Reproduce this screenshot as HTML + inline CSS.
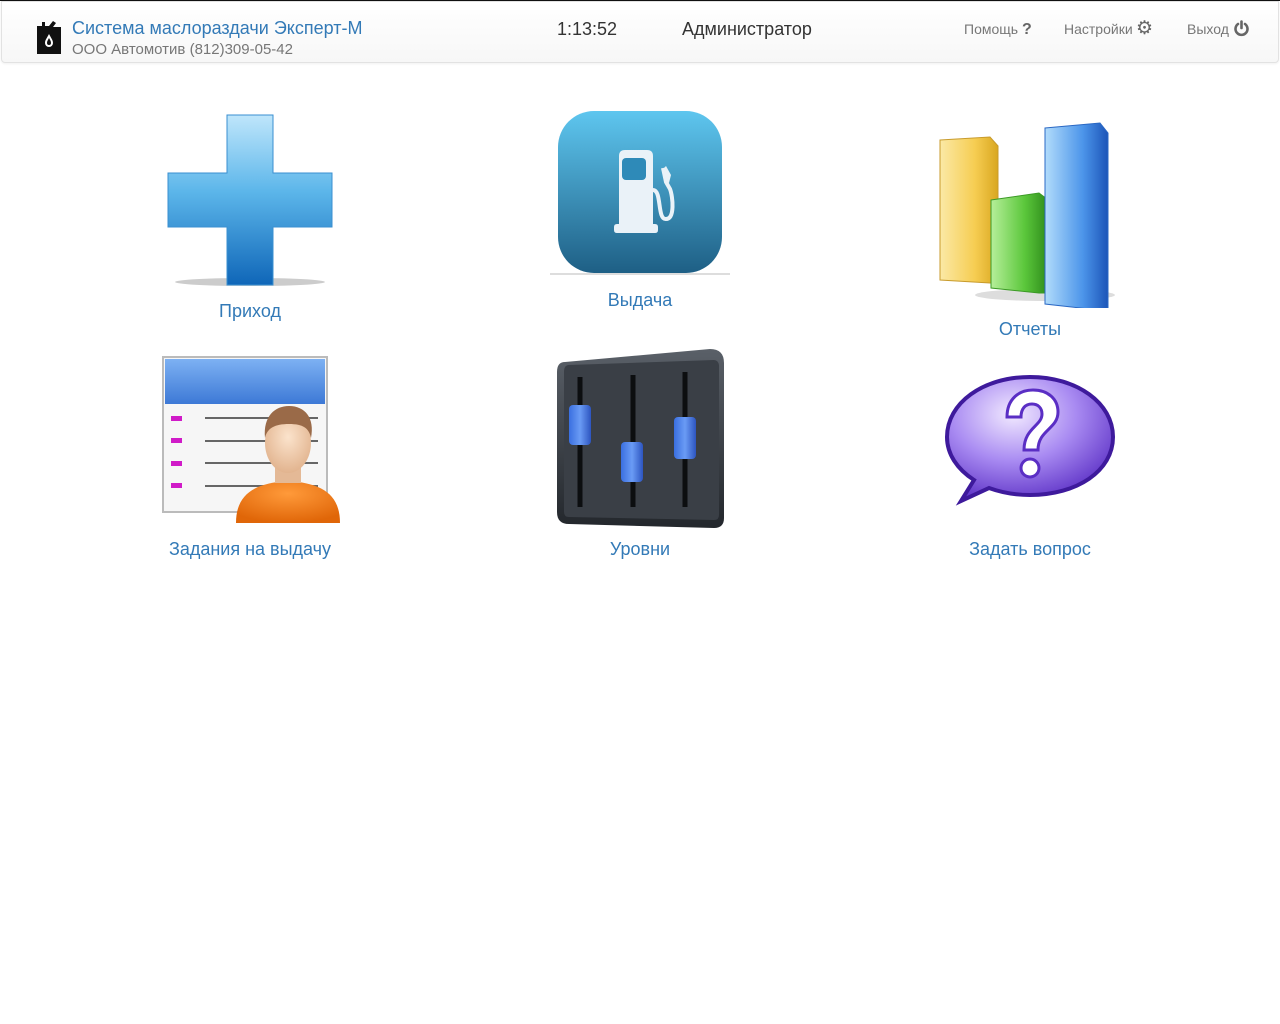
<!DOCTYPE html>
<html><head><meta charset="utf-8"><style>
body{margin:0;width:1280px;height:1024px;background:#fff;font-family:"Liberation Sans",sans-serif;position:relative;overflow:hidden}
.top{position:absolute;left:0;top:0;width:1280px;height:1px;background:#111}
.nav{position:absolute;left:1px;top:1px;width:1276px;height:60px;background:linear-gradient(#fff,#f7f7f7);border:1px solid #e2e2e2;border-radius:0 0 4px 4px;box-shadow:0 1px 2px rgba(0,0,0,.06)}
.t{position:absolute;white-space:nowrap}
.lbl{position:absolute;color:#337ab7;font-size:18px;text-align:center;width:300px}
svg{position:absolute}
</style></head><body>
<div class="top"></div>
<div class="nav"></div>
<svg style="left:35px;top:20px" width="29" height="34" viewBox="0 0 29 34"><path d="M2 6h5v-4h3v4h4l4 -5 3 2 -3 4h8v27h-24z" fill="#111"/><path d="M14 14c-2 4-4 6-4 9a4 4 0 0 0 8 0c0-3-2-5-4-9z" fill="#fff"/><path d="M14 18c-1 2-2 3-2 5a2 2 0 0 0 4 0c0-2-1-3-2-5z" fill="#111"/></svg>
<div class="t" style="left:72px;top:18px;font-size:18px;color:#337ab7">Система маслораздачи Эксперт-М</div>
<div class="t" style="left:72px;top:41px;font-size:15px;color:#777">ООО Автомотив (812)309-05-42</div>
<div class="t" style="left:557px;top:19px;font-size:18px;color:#333">1:13:52</div>
<div class="t" style="left:682px;top:19px;font-size:18px;color:#333">Администратор</div>
<div class="t" style="left:964px;top:21px;font-size:14px;color:#777">Помощь <b style="color:#666;font-size:16px">?</b></div>
<div class="t" style="left:1064px;top:21px;font-size:14px;color:#777">Настройки</div>
<div class="t" style="left:1136px;top:17px;font-size:19px;color:#666">⚙</div>
<div class="t" style="left:1187px;top:21px;font-size:14px;color:#777">Выход</div>
<svg style="left:1233px;top:20px" width="17" height="17" viewBox="0 0 17 17"><path d="M5 4a6 6 0 1 0 7 0" fill="none" stroke="#666" stroke-width="2.6" stroke-linecap="round"/><line x1="8.5" y1="1.5" x2="8.5" y2="8" stroke="#666" stroke-width="2.6" stroke-linecap="round"/></svg>

<svg style="left:165px;top:112px" width="170" height="180" viewBox="0 0 170 180">
<defs><linearGradient id="pg" x1="0" y1="0" x2="0" y2="1"><stop offset="0" stop-color="#bfe6fb"/><stop offset=".45" stop-color="#5cb6ea"/><stop offset="1" stop-color="#0f66b8"/></linearGradient></defs>
<ellipse cx="85" cy="170" rx="75" ry="4" fill="#ccc"/>
<path d="M62 3h46v58h59v54h-59v58h-46v-58h-59v-54h59z" fill="url(#pg)" stroke="#3a8fd0" stroke-width="1"/>
</svg>
<div class="lbl" style="left:100px;top:301px">Приход</div>

<svg style="left:550px;top:108px" width="182" height="170" viewBox="0 0 182 170">
<defs><linearGradient id="fg" x1="0" y1="0" x2="0" y2="1"><stop offset="0" stop-color="#5ec6ef"/><stop offset="1" stop-color="#1e5f85"/></linearGradient></defs>
<line x1="0" y1="166" x2="180" y2="166" stroke="#ddd" stroke-width="2"/>
<rect x="8" y="3" width="164" height="162" rx="36" fill="url(#fg)"/>
<path d="M72 42h25q6 0 6 6v68h2q3 0 3 3v3q0 3-3 3h-38q-3 0-3-3v-3q0-3 3-3h2v-68q0-6 6-6z" fill="#eaf2f8"/>
<rect x="72" y="50" width="24" height="22" rx="4" fill="#2e8ab8"/>
<path d="M103 82c9 0 4 30 13 29c9 0 7-22 4-30l-4-7l-3-14" fill="none" stroke="#eaf2f8" stroke-width="4"/>
<path d="M112 62l4-4 5 9-2 8-5-4z" fill="#eaf2f8"/>
</svg>
<div class="lbl" style="left:490px;top:290px">Выдача</div>

<svg style="left:935px;top:118px" width="190" height="190" viewBox="0 0 190 190">
<defs>
<linearGradient id="yg" x1="0" x2="1"><stop offset="0" stop-color="#fbe9a6"/><stop offset=".6" stop-color="#f6cd52"/><stop offset="1" stop-color="#d9a720"/></linearGradient>
<linearGradient id="gg" x1="0" x2="1"><stop offset="0" stop-color="#b6ef9a"/><stop offset=".6" stop-color="#5bc73b"/><stop offset="1" stop-color="#2f8e1c"/></linearGradient>
<linearGradient id="bg" x1="0" x2="1"><stop offset="0" stop-color="#b2dcfb"/><stop offset=".6" stop-color="#4c95ea"/><stop offset="1" stop-color="#1c55b8"/></linearGradient></defs>
<ellipse cx="110" cy="177" rx="70" ry="6" fill="#ddd"/>
<path d="M5 22l50-3 8 9v137l-8 0-50-3z" fill="url(#yg)" stroke="#c89b2c"/>
<path d="M56 82l48-7 8 6v94l-8 0-48-5z" fill="url(#gg)" stroke="#3b9a25"/>
<path d="M110 10l55-5 8 10v175l-10 2-53-6z" fill="url(#bg)" stroke="#2a68c4"/>
</svg>
<div class="lbl" style="left:880px;top:319px">Отчеты</div>

<svg style="left:158px;top:353px" width="185" height="178" viewBox="0 0 185 178">
<defs><linearGradient id="hg" x1="0" y1="0" x2="0" y2="1"><stop offset="0" stop-color="#7db1f3"/><stop offset="1" stop-color="#3d79d6"/></linearGradient>
<radialGradient id="og" cx=".5" cy=".3" r=".7"><stop offset="0" stop-color="#ff9a3a"/><stop offset="1" stop-color="#e06608"/></radialGradient>
<radialGradient id="sk" cx=".5" cy=".4" r=".6"><stop offset="0" stop-color="#fbe3cc"/><stop offset="1" stop-color="#e2b48f"/></radialGradient></defs>
<rect x="5" y="4" width="164" height="155" fill="#f6f6f6" stroke="#bbb" stroke-width="2"/>
<rect x="7" y="6" width="160" height="45" fill="url(#hg)"/>
<g fill="#d01bc8"><rect x="13" y="63" width="11" height="5"/><rect x="13" y="85" width="11" height="5"/><rect x="13" y="108" width="11" height="5"/><rect x="13" y="130" width="11" height="5"/></g>
<g stroke="#666" stroke-width="2"><line x1="47" y1="65" x2="160" y2="65"/><line x1="47" y1="88" x2="160" y2="88"/><line x1="47" y1="110" x2="160" y2="110"/><line x1="47" y1="133" x2="160" y2="133"/></g>
<path d="M78 170c0-30 20-40 52-42c32 2 52 12 52 42z" fill="url(#og)"/>
<rect x="117" y="100" width="26" height="30" fill="#e4b996"/>
<ellipse cx="130" cy="90" rx="23" ry="30" fill="url(#sk)"/>
<path d="M107 85c-2-22 10-32 24-32c16 0 26 12 22 32c-2-10-8-14-22-14c-14 0-22 4-24 14z" fill="#9a6a48"/>
</svg>
<div class="lbl" style="left:100px;top:539px">Задания на выдачу</div>

<svg style="left:553px;top:347px" width="175" height="185" viewBox="0 0 175 185">
<defs><linearGradient id="dg" x1="0" y1="0" x2="0" y2="1"><stop offset="0" stop-color="#5a6068"/><stop offset="1" stop-color="#23272c"/></linearGradient>
<linearGradient id="kb" x1="0" x2="1"><stop offset="0" stop-color="#3a6fe0"/><stop offset=".5" stop-color="#6a9bf5"/><stop offset="1" stop-color="#2d55c0"/></linearGradient></defs>
<path d="M12 15q-8 0-8 10v140q0 12 12 12l145 4q10 0 10-10v-155q0-14-14-14z" fill="url(#dg)"/>
<path d="M16 18l145-5q4 0 5 5v150q0 5-5 5l-145-3q-5 0-5-5v-140q0-7 5-7z" fill="#3a3f46"/>
<g stroke="#0c0e10" stroke-width="5"><line x1="27" y1="30" x2="27" y2="160"/><line x1="80" y1="28" x2="80" y2="160"/><line x1="132" y1="25" x2="132" y2="160"/></g>
<rect x="16" y="58" width="22" height="40" rx="4" fill="url(#kb)"/>
<rect x="68" y="95" width="22" height="40" rx="4" fill="url(#kb)"/>
<rect x="121" y="70" width="22" height="42" rx="4" fill="url(#kb)"/>
</svg>
<div class="lbl" style="left:490px;top:539px">Уровни</div>

<svg style="left:943px;top:372px" width="175" height="135" viewBox="0 0 175 135">
<defs><radialGradient id="qg" cx=".4" cy=".3" r=".75"><stop offset="0" stop-color="#f2eaff"/><stop offset=".5" stop-color="#a98bf2"/><stop offset="1" stop-color="#5a2ec4"/></radialGradient></defs>
<path d="M87 5c47 0 83 26 83 60s-36 58-83 58c-16 0-30-3-41-7l-28 13 13-21c-17-11-27-26-27-43c0-34 36-60 83-60z" fill="url(#qg)" stroke="#3e1a9c" stroke-width="4"/>
<path d="M64 45c0-18 12-27 26-27c15 0 25 9 25 22c0 17-20 18-20 38h-14c0-22 18-24 18-36c0-6-4-10-10-10c-7 0-11 5-11 13z" fill="#fff" stroke="#5a2ec4" stroke-width="3"/>
<circle cx="87" cy="96" r="9" fill="#fff" stroke="#5a2ec4" stroke-width="3"/>
</svg>
<div class="lbl" style="left:880px;top:539px">Задать вопрос</div>
</body></html>
